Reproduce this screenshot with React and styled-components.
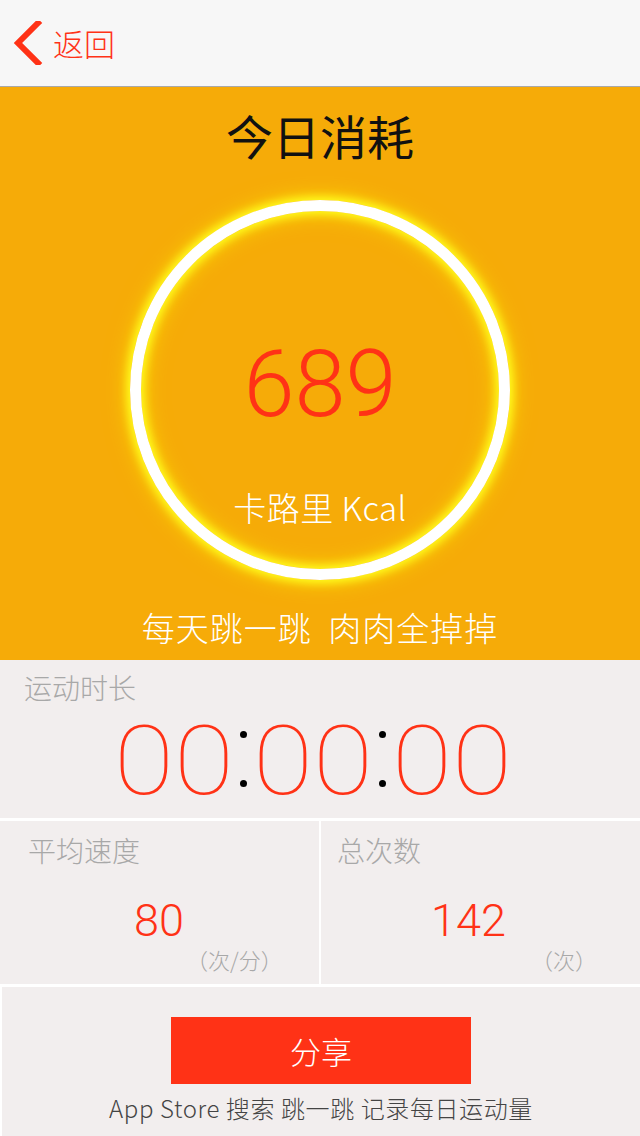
import React from "react";
import styled, { createGlobalStyle } from "styled-components";

const RED = "#ff3216";
const ORANGE = "#f6ab08";
const PANEL = "#f2eeee";
const CJK = `"Noto Sans CJK SC", "Noto Sans", sans-serif`;
const NUM = `Roboto, "Liberation Sans", sans-serif`;

const Global = createGlobalStyle`
  html, body { margin: 0; padding: 0; background: ${PANEL}; }
  body { font-family: ${CJK}; }
  * { box-sizing: border-box; }
`;

const Page = styled.div`
  width: 640px;
  height: 1136px;
  display: flex;
  flex-direction: column;
  overflow: hidden;
  background: ${PANEL};
`;

// Header
const NavBar = styled.header`
  height: 87px;
  background: #f7f7f7;
  border-bottom: 1px solid #a9a9a9;
  display: flex;
  align-items: center;
  padding-left: 13px;
  gap: 10px;
`;

const BackText = styled.span`
  color: ${RED};
  font-size: 31px;
  font-weight: 300;
  line-height: 1;
  margin-top: -1px;
`;

// Orange calorie panel
const Hero = styled.section`
  height: 573px;
  background: ${ORANGE};
  display: flex;
  flex-direction: column;
  align-items: center;
  padding-top: 24px;
`;

const HeroTitle = styled.h1`
  margin: 0;
  font-size: 47px;
  font-weight: 400;
  line-height: 48px;
  color: #111;
`;

const Ring = styled.div`
  margin-top: 41px;
  width: 380px;
  height: 380px;
  border-radius: 50%;
  border: 11px solid #fff;
  box-shadow: 0 0 10px 3px #ffff20, 0 0 22px 4px rgba(255, 240, 0, 0.55),
    inset 0 0 10px 3px #ffff20, inset 0 0 22px 4px rgba(255, 240, 0, 0.55);
  display: flex;
  flex-direction: column;
  align-items: center;
`;

const Calories = styled.div`
  margin-top: 128px;
  font-family: ${NUM};
  font-weight: 300;
  font-size: 92px;
  line-height: 92px;
  color: ${RED};
`;

const Unit = styled.div`
  margin-top: 58px;
  font-size: 33px;
  font-weight: 300;
  line-height: 36px;
  color: #fff;
  white-space: pre;
  letter-spacing: 0.5px;
`;

const Slogan = styled.div`
  margin-top: 29px;
  font-size: 33px;
  font-weight: 300;
  line-height: 36px;
  color: #fff;
  white-space: pre;
  letter-spacing: 1px;
`;

// Duration
const Duration = styled.section`
  height: 161px;
  border-bottom: 3px solid #fff;
  padding: 10px 0 0 24px;
`;

const Label = styled.div`
  font-size: 28px;
  font-weight: 300;
  line-height: 34px;
  color: #a8a8a8;
`;

const Timer = styled.div`
  display: flex;
  justify-content: center;
  align-items: center;
  margin: 12px 0 0 -38px;
  font-family: ${NUM};
  font-weight: 100;
  font-size: 97px;
  line-height: 90px;
  color: ${RED};
`;

const Digits = styled.span`
  display: inline-block;
  width: 108px;
  text-align: center;
  transform: scaleX(1.13);
`;

const Colon = styled.span`
  width: 31px;
  height: 56px;
  display: flex;
  flex-direction: column;
  justify-content: space-between;
  align-items: center;
  margin-top: -4px;

  &::before,
  &::after {
    content: "";
    width: 7px;
    height: 7px;
    border-radius: 50%;
    background: #000;
  }
`;

// Stats
const Stats = styled.section`
  height: 166px;
  display: grid;
  grid-template-columns: 319px 1fr;
  border-bottom: 3px solid #fff;
`;

const StatCell = styled.div`
  display: flex;
  flex-direction: column;
  padding: 12px 0 0 ${(p) => p.$pad}px;
  border-left: ${(p) => (p.$divider ? "2px solid #fff" : "none")};
`;

const StatValue = styled.div`
  margin-top: 32px;
  font-family: ${NUM};
  font-weight: 300;
  font-size: 45px;
  line-height: 44px;
  color: ${RED};
  padding-left: ${(p) => p.$x}px;
`;

const StatUnit = styled.div`
  margin-top: 1px;
  font-size: 22px;
  font-weight: 300;
  line-height: 30px;
  color: #a8a8a8;
  padding-left: ${(p) => p.$x}px;
`;

// Share
const Footer = styled.section`
  flex: 1;
  border-left: 2px solid #fff;
  display: flex;
  flex-direction: column;
  align-items: center;
  padding-top: 30px;
`;

const ShareButton = styled.button`
  width: 300px;
  height: 67px;
  border: none;
  background: ${RED};
  color: #fff;
  font-family: ${CJK};
  font-size: 31px;
  font-weight: 300;
  padding: 0;
`;

const Caption = styled.div`
  margin-top: 9px;
  font-size: 24px;
  font-weight: 300;
  line-height: 30px;
  color: #444;
  letter-spacing: 0.6px;
`;

const BackChevron = () => (
  <svg width="30" height="44" viewBox="0 0 30 44">
    <polyline
      points="25,2 5,22 25,42"
      fill="none"
      stroke={RED}
      strokeWidth="6"
      strokeLinecap="square"
      strokeLinejoin="miter"
    />
  </svg>
);

const App = () => (
  <Page>
    <Global />
    <NavBar>
      <BackChevron />
      <BackText>返回</BackText>
    </NavBar>

    <Hero>
      <HeroTitle>今日消耗</HeroTitle>
      <Ring>
        <Calories>689</Calories>
        <Unit>卡路里 Kcal</Unit>
      </Ring>
      <Slogan>每天跳一跳  肉肉全掉掉</Slogan>
    </Hero>

    <Duration>
      <Label>运动时长</Label>
      <Timer>
        <Digits>00</Digits>
        <Colon />
        <Digits>00</Digits>
        <Colon />
        <Digits>00</Digits>
      </Timer>
    </Duration>

    <Stats>
      <StatCell $pad={28}>
        <Label>平均速度</Label>
        <StatValue $x={106}>80</StatValue>
        <StatUnit $x={158}>（次/分）</StatUnit>
      </StatCell>
      <StatCell $pad={16} $divider>
        <Label>总次数</Label>
        <StatValue $x={94}>142</StatValue>
        <StatUnit $x={194}>（次）</StatUnit>
      </StatCell>
    </Stats>

    <Footer>
      <ShareButton>分享</ShareButton>
      <Caption>App Store 搜索 跳一跳 记录每日运动量</Caption>
    </Footer>
  </Page>
);

export default App;
